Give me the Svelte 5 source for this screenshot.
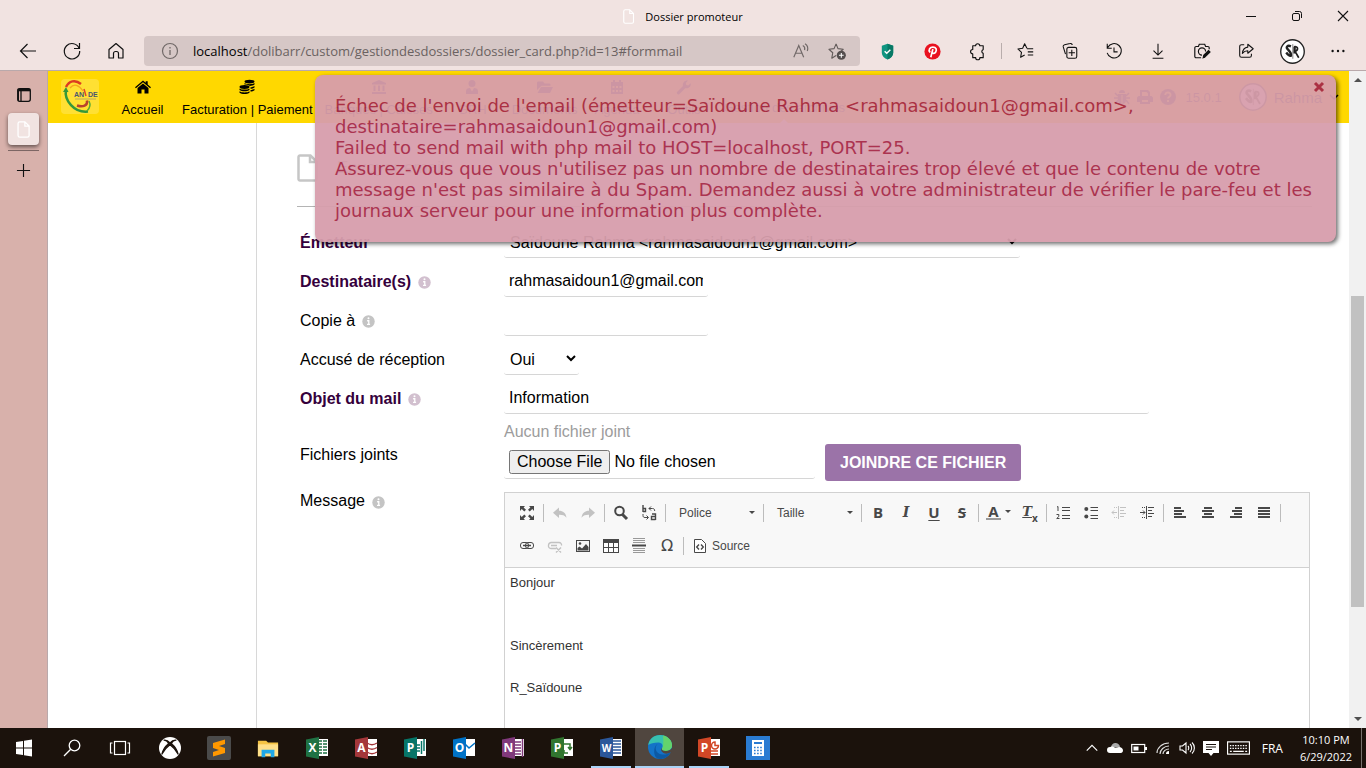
<script lang="ts">
    type Icon = { name: string; label: string; off?: boolean };

    // Shapes for every icon, keyed by name. All are drawn on the box given first.
    const icons: Record<string, [string, string]> = {
        page: ['0 0 16 20', '<path d="M3 1h6l5 5v11a2 2 0 0 1-2 2H3a2 2 0 0 1-2-2V3a2 2 0 0 1 2-2zM9 1v5h5" fill="none" stroke="#fff" stroke-width="1.500"/>'],
        min: ['0 0 12 12', '<path d="M1 6.500h10" stroke="#111"/>'],
        restore: ['0 0 12 12', '<rect x="1.500" y="3.500" width="7" height="7" rx="1.500" fill="none" stroke="#111"/><path d="M4 1.500h4.500a2 2 0 0 1 2 2V8" fill="none" stroke="#111"/>'],
        close: ['0 0 12 12', '<path d="M1 1l10 10M11 1L1 11" stroke="#111" stroke-width="1.100"/>'],
        back: ['0 0 20 20', '<path d="M18 10H3M9.500 3L2.500 10l7 7" fill="none" stroke="#111" stroke-width="1.200"/>'],
        reload: ['0 0 20 20', '<path d="M17.200 7.500A7.700 7.700 0 1 0 17.700 10M17.500 2v5.500H12" fill="none" stroke="#111" stroke-width="1.200"/>'],
        home: ['0 0 20 20', '<path d="M3 8.500L10 2.500l7 6V17h-4.500v-4.500a2 2 0 0 0-2-2h-1a2 2 0 0 0-2 2V17H3z" fill="none" stroke="#111" stroke-width="1.200" stroke-linejoin="round"/>'],
        info: ['0 0 20 20', '<circle cx="10" cy="10" r="7.500" fill="none" stroke="#716968" stroke-width="1.200"/><path d="M10 9v5M10 6v1.400" stroke="#716968" stroke-width="1.300"/>'],
        read: ['0 0 20 20', '<path d="M2 17L7.500 4 13 17M4 12.500h7M12 4c2 1 2.500 3 2 5M14.500 2c3 2 3.500 5 2.500 8" fill="none" stroke="#716968" stroke-width="1.300"/>'],
        star: ['0 0 20 20', '<path d="M8.500 2l2 5 5.500.6-4 3.700-.2 1.500M8.500 2L6.400 7 1 7.600l4 3.700L4 17l4.500-2.800" fill="none" stroke="#625b5a" stroke-width="1.200" stroke-linejoin="round"/><circle cx="14" cy="14" r="4.800" fill="#544e4e"/><path d="M14 11.500v5M11.500 14h5" stroke="#fff" stroke-width="1.100"/>'],
        shield: ['0 0 20 20', '<path d="M10 1.800L16 4v7c0 4-3 6-6 7.500C7 17 4 15 4 11V4z" fill="#0f9580"/><path d="M10 1.800L16 4v7c0 4-3 6-6 7.500z" fill="#087965"/><path d="M7 9.800l2.200 2.100L13 8.100" fill="none" stroke="#fff" stroke-width="1.500"/>'],
        pin: ['0 0 20 20', '<circle cx="10" cy="10" r="8.500" fill="#e9111f"/><path d="M7.500 11c-2.500-3 0-5.700 2.900-5.700 3.500 0 4.300 3 3 5.200-1.300 2.300-3.600 1.500-3.600.2M10.400 7.500L8.200 16" fill="none" stroke="#fff" stroke-width="1.800"/>'],
        puzzle: ['0 0 20 20', '<path d="M5 4h3a2.200 2.200 0 0 1 4.400 0H16v4a2.100 2.100 0 0 0 0 4v4.500h-3.500a2.200 2.200 0 0 1-4.400 0H5V12.500a2.300 2.300 0 0 1 0-4.600z" fill="none" stroke="#111" stroke-width="1.200" stroke-linejoin="round"/>'],
        favs: ['0 0 20 20', '<path d="M11 7L8.500 2 6.300 7 1 7.700l4 3.800L4 17l4.500-2.600M11 7.500h7M12 11h6M12 14.500h6" fill="none" stroke="#111" stroke-width="1.200" stroke-linejoin="round"/>'],
        collect: ['0 0 20 20', '<path d="M5 13.500l-2.500-8a2 2 0 0 1 1.500-2.500l6-1.300a2 2 0 0 1 2.500 1.700" fill="none" stroke="#111" stroke-width="1.200"/><rect x="6.500" y="6" width="11" height="12" rx="2" fill="none" stroke="#111" stroke-width="1.200"/><path d="M12 8.500v7M8.500 12h7" stroke="#111" stroke-width="1.200"/>'],
        history: ['0 0 20 20', '<path d="M3 6a8 8 0 1 1-.6 6M2.500 2v5h5M10 6v5h4" fill="none" stroke="#111" stroke-width="1.200"/>'],
        download: ['0 0 20 20', '<path d="M10 2v12M5 9.500l5 5 5-5M4 18h12" fill="none" stroke="#111" stroke-width="1.200"/>'],
        camera: ['0 0 20 20', '<path d="M9 17.500H3.500A1.500 1.500 0 0 1 2 16V6.500A1.500 1.500 0 0 1 3.500 5H6l1-2.500h6L14 5h2.500A1.500 1.500 0 0 1 18 6.500V8" fill="none" stroke="#111" stroke-width="1.300"/><path d="M10 14.500a4 4 0 1 1 4-4" fill="none" stroke="#111" stroke-width="1.300"/><path d="M10.500 18.500l.8-4 6-6 2.500 2.500-6 6z" fill="#111"/>'],
        share: ['0 0 20 20', '<path d="M8 3H5a2 2 0 0 0-2 2v10a2 2 0 0 0 2 2h9a2 2 0 0 0 2-2v-2M12 2.500l6 5-6 5V9.700c-3 0-4.500 1-6 3 .3-4 2.500-6.500 6-7z" fill="none" stroke="#111" stroke-width="1.200" stroke-linejoin="round"/>'],
        avatar: ['0 0 24 24', '<circle cx="12" cy="12" r="11.300" fill="#fff" stroke="#222" stroke-width="1.300"/><path d="M10.500 7C7 5.500 5.500 8 7.500 10s3.500 3 3 6C9 17 7.500 15 6 13M14 7.500V14" fill="none" stroke="#222" stroke-width="2.300"/><path d="M12.300 5v14" stroke="#555" stroke-width=".7"/><path d="M13.500 7.500c4-1 4.500 3 1 4.500l3.500 6" fill="none" stroke="#222" stroke-width="1.600"/>'],
        dots: ['0 0 20 20', '<g fill="#111"><circle cx="4" cy="10" r="1.300"/><circle cx="10" cy="10" r="1.300"/><circle cx="16" cy="10" r="1.300"/></g>'],
        tabs: ['0 0 16 16', '<rect x="1.700" y="1.700" width="12.600" height="12.600" rx="2" fill="none" stroke="#111" stroke-width="1.300"/><path d="M1.700 3h12.600" stroke="#111" stroke-width="2.600"/><path d="M5 3v11" stroke="#111" stroke-width="1.300"/><path d="M2.500 4v10" stroke="#111" stroke-width="1"/>'],
        plus: ['0 0 16 16', '<path d="M8 1v14M1 8h14" stroke="#111" stroke-width="1.200"/>'],
        // site menu
        house: ['0 0 16 16', '<path d="M0 8.300L8 1.500l2.700 2.300V2.300h2v3.200L16 8.300l-.9 1L8 3.300.9 9.300z"/><path d="M2.500 9L8 4.500 13.500 9v5.500h-4V10.500h-3v4h-4z"/>'],
        coins: ['0 0 16 16', '<ellipse cx="10.500" cy="2.600" rx="5" ry="1.900"/><path d="M5.500 4c2 1.600 8 1.600 10 0v1.600c-1.500 1.200-3 1.300-4.700 1.400-1-1-4-1.400-5.300-1.400z"/><ellipse cx="5.500" cy="8" rx="5" ry="1.900"/><path d="M.5 9.400c2 1.600 8 1.600 10 0V11c-2 1.700-8 1.700-10 0zM.5 12.200c2 1.600 8 1.600 10 0v1.600c-2 1.700-8 1.700-10 0zM11.500 8.200c1.500-.1 3-.6 4-1.300v1.600c-1 .8-2.500 1.200-4 1.300zM11.500 11c1.500-.1 3-.6 4-1.300v1.600c-1 .8-2.500 1.200-4 1.300z"/>'],
        bank: ['0 0 16 16', '<path d="M8 1l7 3v1.500H1V4zM2.500 6.500h2v5.500h-2zM7 6.500h2v5.500H7zM11.500 6.500h2v5.500h-2zM1 13h14v2H1z"/>'],
        user: ['0 0 16 16', '<circle cx="8" cy="4.500" r="3.500"/><path d="M2 15v-3c0-2 1.500-3 4-3l2 3.500L10 9c2.500 0 4 1 4 3v3z"/>'],
        folder: ['0 0 16 16', '<path d="M0 11V4c0-1 .5-1.500 1.500-1.500H6l1.500 2H12c1 0 1.500.5 1.500 1.500v.8H4.500zM.5 14l3.500-6h12l-3 6z"/>'],
        calendar: ['0 0 16 16', '<path fill-rule="evenodd" d="M2 3h2V1h2v2h4V1h2v2h2v12H2zM3.500 7v2h2V7zm3.500 0v2h2V7zm3.500 0v2h2V7zm-7 4v2h2v-2zm3.500 0v2h2v-2zm3.500 0v2h2v-2z"/>'],
        wrench: ['0 0 16 16', '<path d="M1 13l6-6c-.7-3 1.500-6 5-5.500L9.800 4l.5 2 2 .5 2.400-2.300c.6 3.500-2.500 5.800-5.500 5L3.200 15.200C2 16 0 14 1 13z"/>'],
        bug: ['0 0 16 16', '<path d="M5 4a3 3 0 0 1 6 0zM4 5h8v6a4 4 0 0 1-8 0z"/><path d="M1 4l3 3M15 4l-3 3M0 9h16M1 15l3-4M15 15l-3-4" stroke="currentColor" stroke-width="1.500"/><path d="M8 6v9" stroke="#ffd800"/>'],
        print: ['0 0 16 16', '<path fill-rule="evenodd" d="M3 1h8l2 2v4h1.500L16 8.500V13h-3v2H3v-2H0V8.500L1.500 7H3zm2 2v4h6V4.500L9.500 3zm0 8v2h6v-2z"/>'],
        help: ['0 0 16 16', '<circle cx="8" cy="8" r="8"/><path d="M5.300 6c0-3.500 5.500-3 5.300 0C10.500 7.800 8 7.600 8 9.500M8 11v2" fill="none" stroke="#ffd800" stroke-width="1.900"/>'],
        chevron: ['0 0 10 10', '<path d="M1 3l4 4 4-4" fill="none" stroke="currentColor" stroke-width="1.500"/>'],
        hint: ['0 0 14 14', '<circle cx="7" cy="7" r="6.700"/><path d="M5.500 6.200H7.300V10M5.400 10.200h3.300" fill="none" stroke="#fff" stroke-width="1.400"/><circle cx="7" cy="3.600" r="1.100" fill="#fff"/>'],
        cross: ['0 0 12 12', '<path d="M2 2l8 8M10 2l-8 8" stroke="currentColor" stroke-width="3"/>'],
        // editor
        maximize: ['0 0 16 16', '<path d="M1 1h5L4.600 2.400 7 4.800 5.300 6.500 2.700 4 1 6zM15 1v5l-1.700-2-2.600 2.500L9 4.800l2.400-2.400L10 1zM1 15v-5l1.700 2 2.600-2.500L7 11.200l-2.400 2.400L6 15zM15 15h-5l1.400-1.400L9 11.200l1.700-1.700 2.600 2.500L15 10z"/>'],
        undo: ['0 0 16 16', '<path d="M7 2.500v3.300c4 0 6.800 2 7.500 7C12.500 10 10 9.600 7 9.700V13L1 7.700z"/>'],
        redo: ['0 0 16 16', '<path d="M9 2.500v3.300c-4 0-6.800 2-7.500 7C3.500 10 6 9.600 9 9.700V13l6-5.300z"/>'],
        find: ['0 0 16 16', '<circle cx="6.500" cy="6" r="4.300" fill="none" stroke="#484848" stroke-width="2"/><path d="M9.500 9.500L14 14" stroke="#484848" stroke-width="3"/>'],
        replace: ['0 0 16 16', '<path d="M2 0v7M2 3.500h2.500v3H2M11 9h3.500v6M14.500 11.500h-4V14.500h4" fill="none" stroke="#484848" stroke-width="1.400"/><path d="M8 3.500h3.500c1.500 0 2.200.8 2.200 2.500M10 1.500l-2 2 2 2M2 9v1.500c0 1.300.5 2 2 2h3M5.500 10.500l2 2-2 2" fill="none" stroke="#484848"/>'],
        ol: ['0 0 16 16', '<path d="M2 2l1-.5V6M1.500 9.500h2.300v2L1.700 13.500h2.800M7 2.500h8M7 5.500h8M7 10.500h8M7 13.500h8" fill="none" stroke="#484848"/>'],
        ul: ['0 0 16 16', '<circle cx="3.300" cy="4" r="2"/><circle cx="3.300" cy="11.500" r="2"/><path d="M7.500 2.500H15M7.500 5.500H15M7.500 10.500H15M7.500 13.500H15" stroke="#484848"/>'],
        outdent: ['0 0 16 16', '<path d="M7.500 1v13M9 2.500h6M9 5.500h4M9 8.500h6M9 11.500h4M1 7.500h5M3 5.500L1 7.500l2 2" fill="none" stroke="#484848"/><path d="M3 2.500h4M3 12.500h4" stroke="#484848" stroke-dasharray="1 1"/>'],
        indent: ['0 0 16 16', '<path d="M7.500 1v13M9 2.500h6M9 5.500h4M9 8.500h6M9 11.500h4M1 7.500h5M4 5.500l2 2-2 2" fill="none" stroke="#484848"/><path d="M3 2.500h4M3 12.500h4" stroke="#484848" stroke-dasharray="1 1"/>'],
        left: ['0 0 16 16', '<path d="M2 3h7M2 6h10M2 9h8M2 12h12" stroke="#484848" stroke-width="2"/>'],
        center: ['0 0 16 16', '<path d="M4 3h8M2 6h12M4 9h8M2 12h12" stroke="#484848" stroke-width="2"/>'],
        right: ['0 0 16 16', '<path d="M7 3h7M4 6h10M6 9h8M2 12h12" stroke="#484848" stroke-width="2"/>'],
        justify: ['0 0 16 16', '<path d="M2 3h12M2 6h12M2 9h12M2 12h12" stroke="#484848" stroke-width="2"/>'],
        link: ['0 0 16 16', '<rect x="1.500" y="4.500" width="8" height="6" rx="2.500" fill="none" stroke="#484848"/><rect x="6.500" y="4.500" width="8" height="6" rx="2.500" fill="none" stroke="#484848"/><path d="M4 7.500h8" stroke="#484848" stroke-width="1.500"/>'],
        unlink: ['0 0 16 16', '<path d="M9 10.500H4a2.500 2.500 0 0 1-2.500-3 3 3 0 0 1 2.500-3h8a2.500 2.500 0 0 1 2.500 3M4 7.500h6M9 9.500l5 5M14 9.500l-5 5" fill="none" stroke="#484848" stroke-width="1.300"/>'],
        image: ['0 0 16 16', '<rect x="1.500" y="2.500" width="13" height="11" fill="none" stroke="#484848"/><path d="M2.500 12.500V10l2-1.500L7 10.500l4-4.500 2.500 3v3.500z"/><circle cx="5" cy="5.500" r="1.300"/>'],
        table: ['0 0 16 16', '<rect x=".5" y="1.500" width="15" height="13" fill="#fff" stroke="#484848"/><path d="M0 3h16" stroke="#484848" stroke-width="4"/><path d="M5.500 4v10M10.500 4v10M1 9.500h14" stroke="#484848"/>'],
        rule: ['0 0 16 16', '<path d="M2 .5h12M2 2.500h12M2 4.500h12M2 10.500h12M2 12.500h12M2 14.500h12" stroke="#999"/><path d="M1 7.500h14" stroke="#484848" stroke-width="2"/>'],
        source: ['0 0 16 16', '<path d="M2.500 1.500h7l4 4v9h-11z" fill="#fff" stroke="#484848"/><path d="M7 6.500L4.700 9 7 11.500M9 6.500L11.300 9 9 11.500" fill="none" stroke="#484848" stroke-width="1.400"/>'],
        // task bar
        windows: ['0 0 24 24', '<path d="M4 6l7-1v6.500H4zM12 4.800l8-1.200v7.900h-8zM4 12.500h7V19l-7-1zM12 12.500h8v7.900l-8-1.200z" fill="#fff"/>'],
        search: ['0 0 24 24', '<circle cx="14.500" cy="9.500" r="5.300" fill="none" stroke="#fff" stroke-width="1.300"/><path d="M10.700 13.300L4 20" stroke="#fff" stroke-width="1.300"/>'],
        taskview: ['0 0 24 24', '<rect x="6.500" y="5.500" width="11" height="13" fill="none" stroke="#fff" stroke-width="1.200"/><path d="M4.500 7H2.500v10h2M19.500 7h2v10h-2" fill="none" stroke="#fff" stroke-width="1.200"/>'],
        xbox: ['0 0 24 24', '<circle cx="12" cy="12" r="12" fill="#fff"/><path d="M5 3.500c3-.5 5.500 1.200 7 3 1.500-1.800 4-3.500 7-3-2-.2-4.500 1.500-5.500 3.500C17 10 20 14 21 19c-2-4-5.500-8-9-10.500C8.500 11 5 15 3 19c1-5 4-9 7.500-12C9.500 5 7 3.300 5 3.500z" fill="#1b120c" stroke="#1b120c" stroke-width="1.200"/>'],
        sublime: ['0 0 24 24', '<rect width="24" height="24" rx="2" fill="#4a4a4a"/><path d="M6 7L18 3.500V8l-6 2 6 2v5L6 20.500V16l6-2-6-2z" fill="#ff9800"/>'],
        explorer: ['0 0 24 24', '<path d="M1 4h9l2 2h11v15H1z" fill="#f5c445"/><path d="M1 8h22v13H1z" fill="#ffe08a"/><path d="M5 22v-8h14v8h-4v-4H9v4z" fill="#1fa8e8"/>'],
        edge: ['0 0 24 24', '<circle cx="12" cy="12" r="12" fill="#1473c8"/><path d="M.3 10C1 4 6 0 12 0c7 0 12 5 12 10 0 4-3 6-6.500 6-3 0-4-1.300-3.500-2.500 1.500-2 .5-6-3.500-6C6 7.500 2 8.500.3 10z" fill="#37c0b0"/><path d="M15 .4c5 1.200 9 5 9 9.600 0 4-3 6-6.500 6-3 0-4-1.300-3.500-2.500 1.500-2 1.500-6 1-13.100z" fill="#64d36c"/><path d="M9.500 9C6 12 7.500 19 14 19.500c3.500.3 6-.6 8.500-2C20 22 16 24 12 24 4.500 24 5 11 9.500 9z" fill="#0c59a4"/><path d="M13.800 13c-.6 2 1 3 4 3 2.500 0 4.500-.8 6.200-3v3.500c-.3 1-1 1.200-1.500 1-2.500 1.300-5 1.500-7 .5-2.500-1.300-3-4-1.700-5z" fill="#50463f"/>'],
        calc: ['0 0 24 24', '<rect width="24" height="24" fill="#2a7bd2"/><rect x="6" y="4" width="12" height="16" fill="#fff"/><path d="M8 7h8" stroke="#2a7bd2" stroke-width="2"/><path d="M8 11.500h8M8 14.500h8M8 17.500h8" stroke="#2a7bd2" stroke-width="1.500" stroke-dasharray="1.600 1.500"/>'],
        up: ['0 0 16 16', '<path d="M2 11l6-6 6 6" fill="none" stroke="#fff" stroke-width="1.300"/>'],
        cloud: ['0 0 16 16', '<path d="M4 8a4.500 4.500 0 0 1 9-1z" fill="#aaa"/><path d="M3 13a3 3 0 0 1 0-6c2-1 4-.5 5 1l4-1c2 0 4 1.500 4 3.500S14.500 13 13 13z" fill="#fff"/>'],
        battery: ['0 0 16 16', '<rect x=".7" y="4.500" width="13" height="8" fill="none" stroke="#fff" stroke-width="1.200"/><path d="M14 7h2v3h-2z" fill="#fff"/><path d="M2.500 6.500h5v4h-5z" fill="#fff"/>'],
        wifi: ['0 0 16 16', '<path d="M2 13C2 8 7 3 14 3M5 14c0-4 4-8 9-8M8 14c0-3 3-5 6-5" fill="none" stroke="#ddd" stroke-width="1.200"/><path d="M11 14c0-2 1-3 3-3v3z" fill="#fff"/>'],
        sound: ['0 0 16 16', '<path d="M1 6h2.500L7 3v10l-3.500-3H1zM9 6c1 1 1 3 0 4M11 4c2.200 2 2.200 6 0 8M13 2.500c3.200 3 3.200 8 0 11" fill="none" stroke="#fff" stroke-width="1.100"/>'],
        notes: ['0 0 16 16', '<path d="M0 1h16v12h-5.500L8 16l-2.500-3H0z" fill="#fff"/><path d="M3 4.500h10M3 7h10M3 9.500h6" stroke="#1b120d" stroke-width="1.200"/>'],
        keyboard: ['0 0 24 14', '<rect x=".6" y=".6" width="22.800" height="12.800" fill="none" stroke="#fff" stroke-width="1.200"/><path d="M3 4.500h18M3 7.500h18" stroke="#fff" stroke-width="1.300" stroke-dasharray="1.500 1.200"/><path d="M3 10.500h2M6.500 10.500h11M19 10.500h2" stroke="#fff" stroke-width="1.200"/>'],
    };

    // Office tiles share one drawing: coloured cover, letter and a white sheet.
    const office: Record<string, [string, string]> = {
        Excel: ['X', '#1f7244'],
        Access: ['A', '#a4373a'],
        Publisher: ['P', '#077568'],
        Outlook: ['O', '#0072c6'],
        OneNote: ['N', '#80397b'],
        Project: ['P', '#31752f'],
        Word: ['W', '#2b579a'],
        PowerPoint: ['P', '#d24726'],
    };

    const sheets: Record<string, string> = {
        Excel: 'M14 5h3M18 5h4M14 8h3M18 8h4M14 11h3M18 11h4M14 14h3M18 14h4M14 17h3M18 17h4',
        Access: 'M13 7c3 2 7 2 10 0M13 11.500c3 2 7 2 10 0M13 16c3 2 7 2 10 0',
        Publisher: 'M14 9h3M14 12h3M14 15h3M18.500 5v13M21 3v12',
        Outlook: 'M13 8l4 4 6-5',
        OneNote: 'M14 6h6M14 9h6M14 12h6M14 15h6M14 18h6M21.500 3v18',
        Project: 'M14 8h6v5M18 11l2 2.500 2-2.500M18 17h-4v-3',
        Word: 'M14 5h8M14 8h8M14 11h8M14 14h8M14 17h8',
        PowerPoint: 'M18 6a3.500 3.500 0 1 0 3.500 3.500H18zM14 15h7M14 18h7',
    };

    const tasks = [
        { name: 'Xbox', icon: 'xbox' },
        { name: 'Sublime Text', icon: 'sublime' },
        { name: 'Explorer', icon: 'explorer' },
        { name: 'Excel' },
        { name: 'Access' },
        { name: 'Publisher' },
        { name: 'Outlook' },
        { name: 'OneNote' },
        { name: 'Project' },
        { name: 'Word', state: 'open' },
        { name: 'Edge', icon: 'edge', state: 'current' },
        { name: 'PowerPoint', state: 'open' },
        { name: 'Calculator', icon: 'calc' },
    ];

    const extensions = [['shield', 'Shield'], ['pin', 'Pinterest'], ['puzzle', 'Extensions']];
    const tools = [
        ['favs', 'Favorites'], ['collect', 'Collections'], ['history', 'History'],
        ['download', 'Downloads'], ['camera', 'Web capture'], ['share', 'Share'],
    ];

    const menu = [
        ['house', 'Accueil'], ['coins', 'Facturation | Paiement'], ['bank', 'Banques | Caisses'],
        ['user', 'GRH'], ['folder', 'Documents'], ['calendar', 'Agenda'], ['wrench', 'Outils'],
        ['', 'Gestion des archives'],
    ];

    const lists: Icon[] = [
        { name: 'ol', label: 'Liste numérotée' },
        { name: 'ul', label: 'Liste à puces' },
        { name: 'outdent', label: 'Diminuer le retrait', off: true },
        { name: 'indent', label: 'Augmenter le retrait' },
    ];
    const aligns: Icon[] = [
        { name: 'left', label: 'Aligner à gauche' },
        { name: 'center', label: 'Centrer' },
        { name: 'right', label: 'Aligner à droite' },
        { name: 'justify', label: 'Justifier' },
    ];
    const inserts: Icon[] = [
        { name: 'link', label: 'Lien' },
        { name: 'unlink', label: 'Supprimer le lien', off: true },
        { name: 'image', label: 'Image' },
        { name: 'table', label: 'Tableau' },
        { name: 'rule', label: 'Ligne horizontale' },
    ];

    let showError = $state(true);
    let recipient = $state('rahmasaidoun1@gmail.com');
    let copy = $state('');
    let subject = $state('Information');
</script>

{#snippet icon(name: string, w = 20, h = w)}
    <svg width={w} height={h} viewBox={icons[name][0]} fill="currentColor" aria-hidden="true">{@html icons[name][1]}</svg>
{/snippet}

{#snippet editorButtons(items: Icon[])}
    {#each items as b}
        <button type="button" class="ed" class:off={b.off} aria-label={b.label}>{@render icon(b.name, 16)}</button>
    {/each}
{/snippet}

<div class="screen">
    <header class="browser">
        <div class="titlebar">
            <div class="title">{@render icon('page', 12, 15)}<span>Dossier promoteur</span></div>
            <div class="window-buttons">
                <button aria-label="Minimize">{@render icon('min', 12)}</button>
                <button aria-label="Restore">{@render icon('restore', 12)}</button>
                <button aria-label="Close">{@render icon('close', 12)}</button>
            </div>
        </div>
        <div class="toolbar">
            <button aria-label="Back">{@render icon('back')}</button>
            <button aria-label="Refresh">{@render icon('reload')}</button>
            <button aria-label="Home">{@render icon('home')}</button>
            <div class="address">
                {@render icon('info')}
                <span class="url"><b>localhost</b>/dolibarr/custom/gestiondesdossiers/dossier_card.php?id=13#formmail</span>
                <button aria-label="Read aloud">{@render icon('read', 18)}</button>
                <button aria-label="Add to favorites">{@render icon('star', 19)}</button>
            </div>
            {#each extensions as [name, label]}
                <button class="extension" aria-label={label}>{@render icon(name, 19)}</button>
            {/each}
            <i class="split"></i>
            {#each tools as [name, label]}
                <button aria-label={label}>{@render icon(name, 18)}</button>
            {/each}
            <button class="profile" aria-label="Profile">{@render icon('avatar', 25)}</button>
            <button aria-label="Settings">{@render icon('dots', 18)}</button>
        </div>
    </header>

    <div class="window">
        <nav class="tabs" aria-label="Tabs">
            <button aria-label="Tab actions">{@render icon('tabs', 16)}</button>
            <button class="tab" aria-label="Dossier promoteur">{@render icon('page', 14, 17)}</button>
            <hr />
            <button aria-label="New tab">{@render icon('plus', 15)}</button>
        </nav>

        <div class="site">
            <header class="topmenu">
                <a href="#home" class="logo" aria-label="ANADE">
                    <svg width="38" height="35" viewBox="0 0 38 35">
                        <rect width="38" height="35" rx="4" fill="#ffe033" />
                        <path d="M5 8C8 2 14 0 20 5" fill="none" stroke="#dc3b22" stroke-width="2.500" />
                        <path d="M5 11c-2 10 8 23 22 21.500" fill="none" stroke="#35983a" stroke-width="2.500" />
                        <path d="M2 13l3-5 2.500 5z" fill="#35983a" />
                        <path d="M26 32c3-3 4-6 2-10" fill="none" stroke="#5bab35" stroke-width="1.500" />
                        <path d="M16 26.500c6 2 11 0 10-5" fill="none" stroke="#b8432d" stroke-width="2.500" />
                        <path d="M9 9c4-5 9-3 13 3" fill="none" stroke="#f5a51d" stroke-width="1.300" />
                        <path d="M23 10l2 7" stroke="#e0452b" stroke-width="1.500" />
                        <text x="13" y="18" font-size="7" font-weight="bold" fill="#4a5670" font-family="Liberation Sans, sans-serif">AN</text>
                        <text x="27" y="18" font-size="7" font-weight="bold" fill="#4a5670" font-family="Liberation Sans, sans-serif">DE</text>
                        <path d="M14 20h21" stroke="#b9a868" stroke-width="1" />
                    </svg>
                </a>
                <nav>
                    {#each menu as [name, label]}
                        <a href="#menu" class:selected={!name}>
                            <span class="glyph">{#if name}{@render icon(name, 16)}{/if}</span>
                            {label}
                        </a>
                    {/each}
                </nav>
                <div class="login">
                    {@render icon('bug', 16)}
                    {@render icon('print', 16)}
                    {@render icon('help', 16)}
                    <span class="version">15.0.1</span>
                    {@render icon('avatar', 28)}
                    <span>Rahma</span>
                    {@render icon('chevron', 10)}
                </div>
            </header>

            <div class="page">
                <aside></aside>
                <main>
                    <div class="heading">
                        <svg width="21" height="28" viewBox="0 0 21 28" aria-hidden="true">
                            <path d="M3 1.500h10.500l6 6V25a1.500 1.500 0 0 1-1.500 1.500H3A1.500 1.500 0 0 1 1.500 25V3A1.500 1.500 0 0 1 3 1.500zM13 1.500V8h6.500" fill="none" stroke="#c6c6c6" stroke-width="2.500" />
                        </svg>
                        <h1>Envoyer email</h1>
                    </div>

                    <form onsubmit={(e) => e.preventDefault()}>
                        <label class="required" for="from">Émetteur</label>
                        <select id="from" class="from">
                            <option>Saïdoune Rahma &lt;rahmasaidoun1@gmail.com&gt;</option>
                        </select>

                        <label class="required" for="to">Destinataire(s) {@render icon('hint', 13)}</label>
                        <input id="to" class="short" type="text" bind:value={recipient} />

                        <label for="cc">Copie à {@render icon('hint', 13)}</label>
                        <input id="cc" class="short" type="text" bind:value={copy} />

                        <label for="receipt">Accusé de réception</label>
                        <select id="receipt" class="receipt">
                            <option>Oui</option>
                            <option>Non</option>
                        </select>

                        <label class="required" for="subject">Objet du mail {@render icon('hint', 13)}</label>
                        <input id="subject" class="long" type="text" bind:value={subject} />

                        <label for="file">Fichiers joints</label>
                        <div class="files">
                            <p>Aucun fichier joint</p>
                            <div class="attach">
                                <input id="file" type="file" />
                                <button type="submit">JOINDRE CE FICHIER</button>
                            </div>
                        </div>

                        <label class="top" for="message">Message {@render icon('hint', 13)}</label>
                        <div class="editor">
                            <div class="editor-bar">
                                <div class="row">
                                    {@render editorButtons([{ name: 'maximize', label: 'Agrandir' }])}
                                    <i></i>
                                    {@render editorButtons([{ name: 'undo', label: 'Annuler', off: true }, { name: 'redo', label: 'Rétablir', off: true }])}
                                    <i></i>
                                    {@render editorButtons([{ name: 'find', label: 'Rechercher' }, { name: 'replace', label: 'Remplacer' }])}
                                    <i></i>
                                    <button type="button" class="combo">Police <span class="caret"></span></button>
                                    <i></i>
                                    <button type="button" class="combo">Taille <span class="caret"></span></button>
                                    <i></i>
                                    <button type="button" class="ed letter">B</button>
                                    <button type="button" class="ed letter italic">I</button>
                                    <button type="button" class="ed letter under">U</button>
                                    <button type="button" class="ed letter strike">S</button>
                                    <i></i>
                                    <button type="button" class="ed letter color"><span>A</span><span class="caret"></span></button>
                                    <button type="button" class="ed letter clear"><span>T</span><small>x</small></button>
                                    <i></i>
                                    {@render editorButtons(lists)}
                                    <i></i>
                                    {@render editorButtons(aligns)}
                                    <i></i>
                                </div>
                                <div class="row">
                                    {@render editorButtons(inserts)}
                                    <button type="button" class="ed omega">Ω</button>
                                    <i></i>
                                    <button type="button" class="source">{@render icon('source', 16)} Source</button>
                                </div>
                            </div>
                            <div id="message" class="message" role="textbox" aria-label="Message" tabindex="0" contenteditable="true">
                                <p>Bonjour</p>
                                <p><br /></p>
                                <p><br />Sincèrement</p>
                                <p><br />R_Saïdoune</p>
                            </div>
                        </div>
                    </form>
                </main>
            </div>

            {#if showError}
                <div class="notice" role="alert">
                    <button aria-label="Fermer" onclick={() => (showError = false)}>{@render icon('cross', 12)}</button>
                    Échec de l'envoi de l'email (émetteur=Saïdoune Rahma &lt;rahmasaidoun1@gmail.com&gt;, destinataire=rahmasaidoun1@gmail.com)<br />
                    Failed to send mail with php mail to HOST=localhost, PORT=25.<br />
                    Assurez-vous que vous n'utilisez pas un nombre de destinataires trop élevé et que le contenu de votre message n'est pas similaire à du Spam. Demandez aussi à votre administrateur de vérifier le pare-feu et les journaux serveur pour une information plus complète.
                </div>
            {/if}
        </div>

        <div class="scrollbar">
            <span class="arrow up"></span>
            <div class="track"><div class="thumb"></div></div>
            <span class="arrow"></span>
        </div>
    </div>

    <footer class="taskbar">
        <button class="sys" aria-label="Start">{@render icon('windows', 24)}</button>
        <button class="sys" aria-label="Search">{@render icon('search', 24)}</button>
        <button class="sys" aria-label="Task view">{@render icon('taskview', 24)}</button>
        {#each tasks as t}
            <button class="task {t.state ?? ''}" aria-label={t.name}>
                {#if t.icon}
                    {@render icon(t.icon, t.icon === 'xbox' || t.icon === 'explorer' ? 22 : 24)}
                {:else}
                    <svg width="24" height="24" viewBox="0 0 24 24">
                        <rect x="12" y="3" width="11" height="17" fill="#fff" />
                        <path d={sheets[t.name]} fill="none" stroke={office[t.name][1]} stroke-width="1.500" />
                        <path d="M1 3.500L14 1v22L1 20.500z" fill={office[t.name][1]} />
                        <text x="7.500" y="16" text-anchor="middle" font-size={t.name === 'Word' ? 10 : 12} font-weight="bold" fill="#fff" font-family="Open Sans, sans-serif">{office[t.name][0]}</text>
                    </svg>
                {/if}
            </button>
        {/each}
        <div class="tray">
            {#each ['up', 'cloud', 'battery', 'wifi', 'sound', 'notes'] as name}
                {@render icon(name, name === 'up' ? 14 : 16)}
            {/each}
            {@render icon('keyboard', 23, 14)}
            <span class="lang">FRA</span>
            <div class="clock"><time>10:10 PM</time><time>6/29/2022</time></div>
        </div>
    </footer>
</div>

<style>
    :global(body) {
        margin: 0;
    }

    .screen {
        display: flex;
        flex-direction: column;
        height: 100vh;
        overflow: hidden;
        font-family: "Liberation Sans", Arial, sans-serif;
        color: #000;
    }

    .screen :global(*) {
        box-sizing: border-box;
    }

    svg {
        flex: none;
    }

    button {
        display: flex;
        align-items: center;
        justify-content: center;
        padding: 0;
        border: 0;
        background: none;
        color: inherit;
        font: inherit;
    }

    /* browser frame */
    .browser {
        flex: none;
        background: #f1e3e1;
        border-bottom: 1px solid #b9a9ab;
        font-family: "Open Sans", "Segoe UI", sans-serif;
    }

    .titlebar {
        display: grid;
        grid-template-columns: 1fr auto 1fr;
        align-items: center;
        height: 32px;
    }

    .title {
        grid-column: 2;
        display: flex;
        align-items: center;
        gap: 10px;
        font-size: 11px;
    }

    .window-buttons {
        display: flex;
        justify-content: flex-end;
    }

    .window-buttons button {
        width: 46px;
        height: 32px;
    }

    .toolbar {
        display: flex;
        align-items: center;
        height: 38px;
        padding: 0 6px;
    }

    .toolbar button {
        width: 44px;
        height: 30px;
    }

    .address {
        display: flex;
        align-items: center;
        flex: 1;
        min-width: 0;
        height: 30px;
        margin: 0 5px 0 6px;
        padding: 0 4px 0 16px;
        border-radius: 4px;
        background: #d6c7c6;
    }

    .url {
        flex: 1;
        margin-left: 13px;
        overflow: hidden;
        white-space: nowrap;
        color: #6a6261;
        font-size: 13px;
    }

    .url b {
        color: #000;
        font-weight: normal;
    }

    .address button {
        width: 37px;
    }

    .toolbar .extension {
        width: 45px;
    }

    .split {
        width: 1px;
        height: 16px;
        margin: 0 2px 0 1px;
        background: #b9adac;
    }

    .toolbar .profile {
        width: 48px;
    }

    .window {
        display: flex;
        flex: 1;
        min-height: 0;
    }

    .tabs {
        display: flex;
        flex-direction: column;
        align-items: center;
        gap: 6px;
        flex: none;
        width: 48px;
        padding-top: 12px;
        background: #d8b1ab;
        border-right: 1px solid #b9a9ab;
    }

    .tabs button {
        width: 31px;
        height: 24px;
    }

    .tabs .tab {
        height: 32px;
        border-radius: 4px;
        background: #f1e3e1;
        box-shadow: 0 2px 4px rgba(0, 0, 0, 0.55);
    }

    .tabs hr {
        width: 31px;
        margin: -1px 0 1px;
        border: 0;
        border-top: 1px solid #7d6664;
    }

    /* site */
    .site {
        position: relative;
        display: flex;
        flex-direction: column;
        flex: 1;
        min-width: 0;
        overflow: hidden;
        background: #fff;
    }

    .topmenu {
        display: flex;
        flex: none;
        height: 52px;
        background: #ffd800;
        font-size: 13px;
    }

    .logo {
        padding: 8px 10px 0 13px;
    }

    .topmenu nav {
        display: flex;
    }

    .topmenu nav a {
        position: relative;
        display: flex;
        flex-direction: column;
        align-items: center;
        min-width: 67px;
        padding: 8px 6px 0;
        color: #000;
        line-height: 30px;
        text-decoration: none;
        white-space: nowrap;
    }

    .glyph {
        display: flex;
        height: 16px;
    }

    .selected::after {
        content: "";
        position: absolute;
        bottom: 0;
        border: 4px solid transparent;
        border-top: 0;
        border-bottom-color: #fff;
    }

    .login {
        display: flex;
        align-items: center;
        gap: 7px;
        margin-left: auto;
        padding-right: 10px;
        font-size: 15px;
    }

    .version {
        margin: 0 10px 0 2px;
        font-size: 13px;
    }

    .page {
        display: flex;
        flex: 1;
        min-height: 0;
    }

    aside {
        flex: none;
        width: 209px;
        border-right: 1px solid #d8d8d8;
    }

    main {
        flex: 1;
        min-width: 0;
        padding: 0 37px 0 40px;
    }

    .heading {
        display: flex;
        align-items: center;
        gap: 19px;
        height: 84px;
        padding-top: 6px;
        border-bottom: 1px solid #b4b4b4;
    }

    h1 {
        margin: 0;
        color: #888;
        font-size: 17px;
        font-weight: normal;
    }

    form {
        display: grid;
        grid-template-columns: 204px 1fr;
        row-gap: 5px;
        align-items: center;
        padding: 17px 2px 0 3px;
        font-size: 16px;
    }

    label {
        display: flex;
        align-items: center;
        gap: 7px;
        padding-top: 3px;
    }

    label :global(svg) {
        margin-top: 2px;
        color: #c4c4c4;
    }

    .required {
        color: #35003c;
        font-weight: bold;
    }

    .required :global(svg) {
        color: #d2c0cf;
    }

    .top {
        align-self: start;
        padding-top: 0;
    }

    input,
    select {
        height: 34px;
        padding: 3px 5px 0;
        border: 0;
        border-bottom: 1px solid #d6d6d6;
        border-radius: 3px;
        background: none;
        color: #000;
        font: inherit;
    }

    select {
        padding: 4px 2px 0;
    }

    .from {
        width: 64%;
    }

    .short {
        width: 204px;
    }

    .receipt {
        width: 75px;
    }

    .long {
        width: 80%;
    }

    .files {
        padding-bottom: 6px;
    }

    .files p {
        margin: 0;
        color: #9c9c9c;
        line-height: 25px;
    }

    .attach {
        display: flex;
        gap: 10px;
        height: 37px;
    }

    .attach input {
        width: 311px;
        height: 35px;
        padding: 6px 5px 4px;
    }

    .attach button {
        padding: 0 15px;
        border-radius: 3px;
        background: #9b73a8;
        color: #fff;
        font-weight: bold;
    }

    .editor {
        border: 1px solid #d1d1d1;
    }

    .editor-bar {
        padding: 3px 8px 5px;
        border-bottom: 1px solid #d1d1d1;
        background: #f8f8f8;
        color: #484848;
        font-size: 12px;
    }

    .row {
        display: flex;
        align-items: center;
        height: 33px;
    }

    .row i {
        flex: none;
        width: 1px;
        height: 18px;
        margin: 0 2px;
        background: #bcbcbc;
    }

    .ed {
        flex: none;
        width: 28px;
        height: 28px;
    }

    .off {
        opacity: 0.3;
    }

    .combo {
        justify-content: space-between;
        width: 93px;
        height: 28px;
        padding: 0 6px 0 11px;
    }

    .caret {
        border: 3px solid transparent;
        border-top-color: #484848;
        border-bottom: 0;
    }

    .letter {
        padding-bottom: 2px;
        font-family: "Open Sans", sans-serif;
        font-size: 15px;
        font-weight: bold;
    }

    .italic {
        font-family: "DejaVu Serif", serif;
        font-style: italic;
        font-size: 14px;
    }

    .under {
        text-decoration: underline;
        text-underline-offset: 2px;
    }

    .strike {
        text-decoration: line-through;
    }

    .color {
        gap: 4px;
        width: 35px;
    }

    .color span:first-child {
        width: 15px;
        border-bottom: 2px solid #999;
        line-height: 14px;
    }

    .clear span {
        font-family: "DejaVu Serif", serif;
        font-style: italic;
        font-size: 13px;
        text-decoration: underline;
    }

    .clear small {
        align-self: flex-end;
        font-size: 10px;
    }

    .omega {
        font-family: "DejaVu Sans", sans-serif;
        font-size: 16px;
    }

    .source {
        gap: 4px;
        height: 28px;
        padding: 0 5px 0 6px;
    }

    .message {
        height: 240px;
        padding: 4px 5px;
        color: #333;
        font-size: 13px;
        line-height: 21px;
    }

    .message p {
        margin: 0;
    }

    /* lies over the menu and the top of the form */
    .notice {
        position: absolute;
        top: 4px;
        right: 13px;
        left: 267px;
        padding: 20px 20px 21px;
        border-radius: 8px;
        background: #d79eac;
        box-shadow: 2px 2px 4px rgba(0, 0, 0, 0.6);
        color: #a72947;
        font-family: "DejaVu Sans", Verdana, sans-serif;
        font-size: 18px;
        line-height: 21px;
        opacity: 0.95;
    }

    .notice button {
        position: absolute;
        top: 6px;
        right: 11px;
    }

    .scrollbar {
        display: flex;
        flex-direction: column;
        align-items: center;
        flex: none;
        width: 17px;
        padding: 7px 0;
        background: #f1f1f1;
    }

    .arrow {
        border: 4px solid transparent;
        border-top-color: #505050;
        border-bottom: 0;
    }

    .up {
        transform: rotate(180deg);
    }

    .track {
        flex: 1;
        display: flex;
        flex-direction: column;
        width: 13px;
        padding: 6px 0;
    }

    .thumb {
        height: 50%;
        margin-top: auto;
        margin-bottom: 104px;
        background: #c1c1c1;
    }

    /* task bar */
    .taskbar {
        display: flex;
        flex: none;
        height: 40px;
        background: #1b120c;
        color: #fff;
        font-family: "Open Sans", "Segoe UI", sans-serif;
    }

    .taskbar button {
        width: 48px;
        height: 40px;
    }

    .taskbar .task {
        width: 49px;
    }

    .task:nth-child(4) {
        margin-left: 1px;
    }

    .open {
        background: linear-gradient(#aad3f7, #aad3f7) center bottom / 40px 2px no-repeat;
    }

    .current {
        background: #50463f;
        border-bottom: 2px solid #aad3f7;
    }

    .tray {
        display: flex;
        align-items: center;
        gap: 8px;
        margin-left: auto;
        margin-right: 4px;
        border-right: 1px solid #77716d;
        font-size: 11px;
    }

    .lang {
        margin-left: 4px;
        font-size: 12px;
    }

    .clock {
        display: flex;
        flex-direction: column;
        align-items: center;
        padding: 0 9px;
        line-height: 17px;
    }
</style>
